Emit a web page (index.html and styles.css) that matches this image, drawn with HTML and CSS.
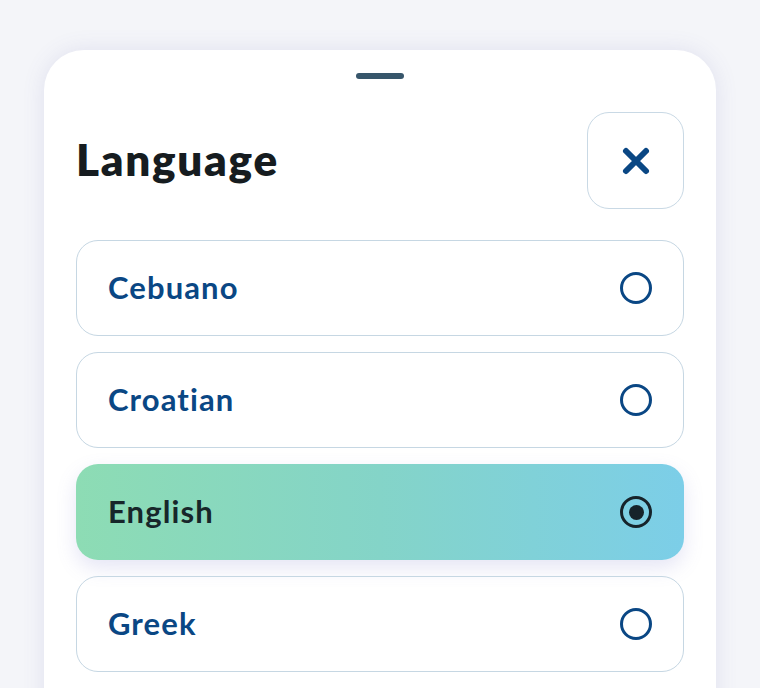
FILE: index.html
```html
<!DOCTYPE html>
<html lang="en">
<head>
<meta charset="utf-8">
<title>Language</title>
<link rel="stylesheet" href="styles.css">
</head>
<body>
<div class="sheet">
  <div class="handle"></div>
  <div class="header">
    <h1 class="title">Language</h1>
    <button class="close" aria-label="Close">
      <svg width="30" height="30" viewBox="0 0 30 30"><path d="M5 5 L25 25 M25 5 L5 25" stroke="#0a4784" stroke-width="6" stroke-linecap="round"/></svg>
    </button>
  </div>
  <ul class="options">
    <li class="option"><span class="label">Cebuano</span><span class="radio"></span></li>
    <li class="option"><span class="label">Croatian</span><span class="radio"></span></li>
    <li class="option selected"><span class="label">English</span><span class="radio"></span></li>
    <li class="option"><span class="label">Greek</span><span class="radio"></span></li>
    <li class="option"><span class="radio"></span></li>
  </ul>
</div>
</body>
</html>
```
FILE: styles.css
```css
html, body { margin: 0; padding: 0; }
body {
  background: #f4f5f9;
  font-family: "Lato", "Noto Sans", sans-serif;
  height: 688px;
  overflow: hidden;
  padding: 50px 44px 0;
  box-sizing: border-box;
}
.sheet {
  background: #ffffff;
  border-radius: 40px 40px 0 0;
  box-shadow: 0 0 22px rgba(90, 90, 170, 0.13);
  padding: 23px 32px 40px;
  min-height: 700px;
  box-sizing: border-box;
}
.handle {
  width: 48px;
  height: 6px;
  border-radius: 3px;
  background: #37566b;
  margin: 0 auto;
}
.header {
  display: flex;
  align-items: center;
  justify-content: space-between;
  margin-top: 33px;
}
.title {
  margin: 0 0 4px;
  font-size: 44px;
  line-height: 1;
  font-weight: 800;
  color: #161c20;
  letter-spacing: 1.7px;
}
.close {
  width: 97px;
  height: 97px;
  border: 1.5px solid #c9d9e5;
  border-radius: 22px;
  background: #fff;
  display: flex;
  align-items: center;
  justify-content: center;
  padding: 0;
}
.options {
  list-style: none;
  margin: 31px 0 0;
  padding: 0;
  display: flex;
  flex-direction: column;
  gap: 16px;
}
.option {
  height: 96px;
  box-sizing: border-box;
  border: 1.5px solid #c6d7e3;
  border-radius: 22px;
  display: flex;
  align-items: center;
  justify-content: space-between;
  padding: 0 31px 0 31px;
}
.option .radio:only-child { margin-left: auto; }
.label {
  font-size: 31px;
  font-weight: 700;
  color: #0a4784;
  letter-spacing: 1.1px;
  margin-bottom: 2px;
}
.radio {
  width: 32px;
  height: 32px;
  box-sizing: border-box;
  border: 3.5px solid #0a4784;
  border-radius: 50%;
  display: flex;
  align-items: center;
  justify-content: center;
}
.option.selected {
  border: none;
  padding: 0 32px;
  background: linear-gradient(90deg, #8ddcb4 0%, #84d4c8 50%, #7ccee8 100%);
  box-shadow: 0 8px 20px rgba(110, 110, 200, 0.18);
}
.option.selected .label { color: #17262a; }
.option.selected .radio { border-color: #16232a; }
.option.selected .radio::after {
  content: "";
  width: 15px;
  height: 15px;
  border-radius: 50%;
  background: #16232a;
}
```
